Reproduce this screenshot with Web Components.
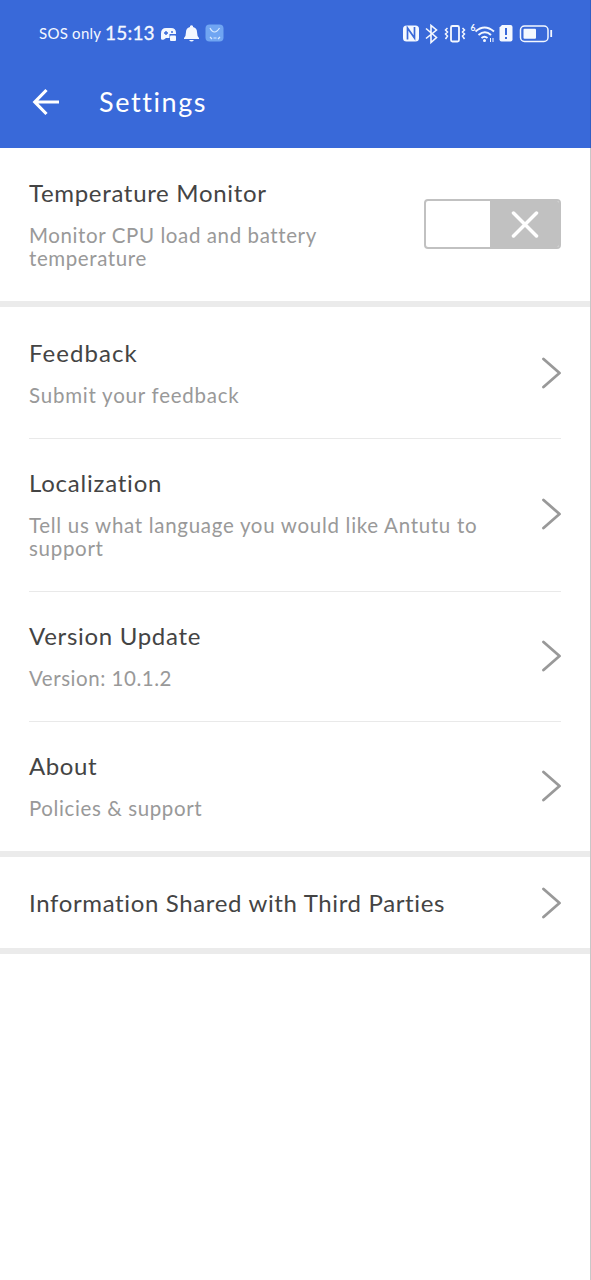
<!DOCTYPE html>
<html lang="en">
<head>
<meta charset="utf-8">
<title>Settings</title>
<style>
html,body{margin:0;height:100%;background:#fff}
body{font-family:Lato,"Noto Sans",sans-serif}
</style>
</head>
<body>
<settings-screen></settings-screen>
<script>
const define = (name, html, setup) => customElements.define(name, class extends HTMLElement {
  connectedCallback() {
    if (this.shadowRoot) return;
    const t = document.createElement('template');
    t.innerHTML = html;
    this.attachShadow({mode: 'open'}).append(t.content.cloneNode(true));
    if (setup) setup(this, this.shadowRoot);
  }
});

define('status-bar', `
<style>
:host{display:flex;align-items:center;height:65px;box-sizing:border-box;padding:0 37px 0 39px;color:#f4f8ff}
.carrier{font-size:15px;letter-spacing:.25px;width:66px;white-space:nowrap}
.clock{font-size:19px;letter-spacing:.2px;width:55px;white-space:nowrap;-webkit-text-stroke:.3px #f4f8ff}
svg{display:block;flex:none}
.right{margin-left:auto}
</style>
<span class="carrier">SOS only</span><span class="clock">15:13</span>
<svg width="66" height="24" viewBox="160 21 66 24">
  <path d="M161 38.500v-5q0-5.500 5-5.500h5q5 0 5 5v1h-6.500v4h-3.500l-2 1.500q-3 1-3-1z" fill="#f4f8ff"/>
  <path d="M164 33h4M166 31v4M171 32h2" stroke="#3969d9" stroke-width="1.400"/>
  <rect x="170" y="35.500" width="6" height="5.500" rx="1" fill="#f4f8ff"/>
  <path d="M184 38q2-2 2-6q0-4 4-5v-1q1.500-1.500 3 0v1q4 1 4 5q0 4 2 6v1h-15zM189 40h5q-2.500 3-5 0z" fill="#f4f8ff"/>
  <rect x="205.500" y="24.500" width="18" height="17" rx="4" fill="#70a5f2"/>
  <path d="M210 28q2 4 4.500 4t5-4M210 37l2 2M220 37l-2 2M213.500 38h3" fill="none" stroke="#d9eaff" stroke-width="1.200"/>
</svg>
<svg class="right" width="151" height="24" viewBox="402 21 151 24" fill="none" stroke="#f4f8ff" stroke-width="1.800">
  <rect x="403" y="25.500" width="16" height="16" rx="3.500" fill="#f4f8ff" stroke="none"/>
  <path d="M407.500 39.500v-11.500l7 10v-11" stroke="#3969d9" stroke-width="1.700"/>
  <path d="M426 28.500l10.500 9-5.500 5v-17l5.500 4.500-10.500 8.500" stroke-width="1.600"/>
  <rect x="451" y="26" width="8" height="15.500" rx="1.500"/>
  <path d="M447.500 28l-2 2 2 2-2 2 2 2-2 3M462.500 28l2 2-2 2 2 2-2 2 2 3" stroke-width="1.500"/>
  <path d="M475.500 31.500q9-8 18.500 0M478.500 35q6.500-5.500 12.500 0M481.500 38q3-2.500 6 0" stroke-width="1.900"/>
  <circle cx="484.500" cy="40.500" r="1.500" fill="#f4f8ff" stroke="none"/>
  <path d="M490.500 38v4M493 38v4" stroke-width="1"/>
  <text x="470.500" y="30.500" font-size="8.500" font-weight="700" fill="#f4f8ff" stroke="none">6</text>
  <path d="M502 25h8.500q2 0 2 2v12.500q0 2-2 2h-9q-2 0-2-2v-12z" fill="#f4f8ff" stroke="none"/>
  <path d="M506 28v7M506 37v2" stroke="#3969d9" stroke-width="2"/>
  <rect x="520.500" y="26" width="27.500" height="15.500" rx="4" stroke-width="1.500"/>
  <rect x="523.500" y="28.800" width="12.500" height="10" rx="1" fill="#f4f8ff" stroke="none"/>
  <path d="M551.200 30v7" stroke-width="1.800"/>
</svg>`);

define('app-bar', `
<style>
:host{display:flex;align-items:center;height:83px;padding:0 32px 10px;box-sizing:border-box;color:#fff}
svg{display:block;margin-right:39px}
h1{margin:0;font-weight:400;font-size:27px;line-height:34px;letter-spacing:1.6px}
</style>
<svg width="28" height="28" viewBox="0 0 28 28" fill="none" stroke="#fff" stroke-width="3.200"><path d="M2.800 14H27M14.500 2L2.800 14l11.700 12"/></svg>
<h1><slot></slot></h1>`);

define('chevron-icon', `
<style>:host{display:block;flex:none}svg{display:block}</style>
<svg width="20" height="32" viewBox="0 0 20 32" fill="none" stroke="#999" stroke-width="2.800" stroke-linecap="round" stroke-linejoin="round"><path d="M2.500 2l16 14-16 14"/></svg>`);

define('toggle-switch', `
<style>
:host{display:flex;box-sizing:border-box;width:137px;height:50px;border:2px solid #c1c1c1;border-radius:4px;background:#fff;overflow:hidden;justify-content:flex-end}
div{width:69px;background:#c1c1c1;display:flex;align-items:center;justify-content:center}
</style>
<div><svg width="28" height="28" viewBox="0 0 28 28" stroke="#fff" stroke-width="3.500" stroke-linecap="round"><path d="M2.500 3l23 23M25.500 3l-23 23"/></svg></div>`);

define('settings-row', `
<style>
:host{display:flex;align-items:center;margin:0 29px 0 29px;padding:30px 0 32px;box-sizing:border-box;border-top:1px solid transparent}
:host([line]){border-top-color:#e9e9e9}
:host([simple]){padding:30px 0 31px}
.text{flex:1;min-width:0}
.title{font-size:24px;line-height:28px;color:#444;letter-spacing:var(--title-space,.6px);white-space:nowrap}
.desc{font-size:20.500px;line-height:23px;color:#999;letter-spacing:var(--desc-space,.6px);margin-top:17px;max-width:var(--desc-width,470px)}
:host([simple]) .desc{display:none}
</style>
<div class="text"><div class="title"><slot name="title"></slot></div><div class="desc"><slot></slot></div></div>
<slot name="control"><chevron-icon></chevron-icon></slot>`);

define('settings-group', `
<style>:host{display:block;border-bottom:6px solid #ebebeb;box-sizing:border-box}</style><slot></slot>`);

define('settings-screen', `
<style>
:host{display:block;height:1280px;box-sizing:border-box;border-right:1px solid #c8c8c8;background:#fff}
header{background:#3969d9;height:148px;margin-right:-1px;box-sizing:border-box;border-right:1px solid #315dc4}
.first{height:159px}
.middle{height:550px}
.last{height:97px}
.first settings-row{height:153px}
.row{height:130px}
.tall{height:153px}
.middle{padding-top:1px}
.last settings-row{height:91px}
</style>
<header><status-bar></status-bar><app-bar>Settings</app-bar></header>
<settings-group class="first"><settings-row style="--desc-width:340px;--title-space:.68px"><span slot="title">Temperature Monitor</span>Monitor CPU load and battery temperature<toggle-switch slot="control"></toggle-switch></settings-row></settings-group>
<settings-group class="middle">
<settings-row class="row" style="--title-space:1.05px;--desc-space:.77px"><span slot="title">Feedback</span>Submit your feedback</settings-row>
<settings-row class="tall" line style="--title-space:.78px;--desc-space:.7px"><span slot="title">Localization</span>Tell us what language you would like Antutu to support</settings-row>
<settings-row class="row" line style="--title-space:.7px;--desc-space:.53px"><span slot="title">Version Update</span>Version: 10.1.2</settings-row>
<settings-row class="row" line><span slot="title">About</span>Policies &amp; support</settings-row>
</settings-group>
<settings-group class="last"><settings-row simple style="--title-space:.64px"><span slot="title">Information Shared with Third Parties</span></settings-row></settings-group>`);
</script>
</body>
</html>
